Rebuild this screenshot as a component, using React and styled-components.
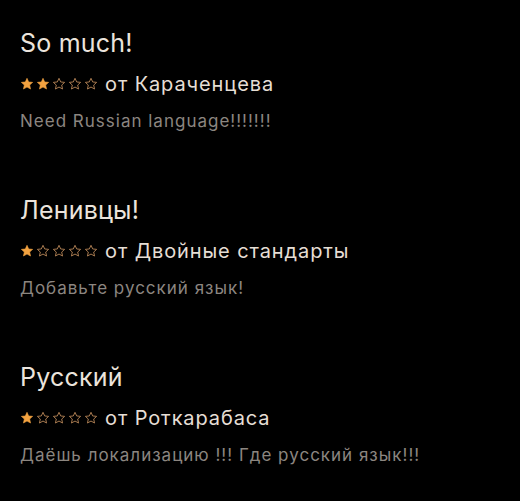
import React from "react";
import styled, { createGlobalStyle } from "styled-components";

const GlobalStyle = createGlobalStyle`
    html, body {
        margin: 0;
        padding: 0;
        background: #000;
    }
    body {
        font-family: Inter, "Noto Sans", sans-serif;
        -webkit-font-smoothing: antialiased;
    }
`

const reviews = [
    { title: "So much!", rating: 2, author: "Караченцева", text: "Need Russian language!!!!!!!" },
    { title: "Ленивцы!", rating: 1, author: "Двойные стандарты", text: "Добавьте русский язык!" },
    { title: "Русский", rating: 1, author: "Роткарабаса", text: "Даёшь локализацию !!! Где русский язык!!!" },
]

const Star = ({ filled }) => (
    <StarIcon viewBox="0 0 24 24" $filled={filled}>
        <path d="M12 2.2l2.9 6.3 6.8.7-5.1 4.6 1.5 6.8L12 17.2l-6.1 3.4 1.5-6.8-5.1-4.6 6.8-.7z" />
    </StarIcon>
)

const App = () => {
    return (
        <>
            <GlobalStyle />
            <List>
                {reviews.map((r, i) => (
                    <Review key={i}>
                        <Title>{r.title}</Title>
                        <Meta>
                            <Stars>
                                {[0, 1, 2, 3, 4].map((n) => (
                                    <Star key={n} filled={n < r.rating} />
                                ))}
                            </Stars>
                            <span>от {r.author}</span>
                        </Meta>
                        <Body>{r.text}</Body>
                    </Review>
                ))}
            </List>
        </>
    )
}

const List = styled.div`
    display: flex;
    flex-direction: column;
    gap: 64px;
    padding: 28px 20px 0;
`

const Review = styled.div`
    display: flex;
    flex-direction: column;
`

const Title = styled.div`
    font-size: 25px;
    line-height: 30px;
    letter-spacing: 0.2px;
    color: #ebe4dc;
`

const Meta = styled.div`
    display: flex;
    align-items: center;
    gap: 7px;
    margin-top: 14px;
    font-size: 20px;
    line-height: 24px;
    letter-spacing: 0.9px;
    color: #e6ded5;
`

const Stars = styled.div`
    display: flex;
    gap: 2px;
`

const StarIcon = styled.svg`
    width: 14px;
    height: 14px;
    fill: ${(p) => (p.$filled ? "#f2a240" : "none")};
    stroke: ${(p) => (p.$filled ? "#f2a240" : "#a87a50")};
    stroke-width: ${(p) => (p.$filled ? 1 : 1.7)};
    stroke-linejoin: round;
`

const Body = styled.div`
    margin-top: 15px;
    font-size: 17px;
    line-height: 20px;
    letter-spacing: 1px;
    color: #8c8680;
`

export default App
